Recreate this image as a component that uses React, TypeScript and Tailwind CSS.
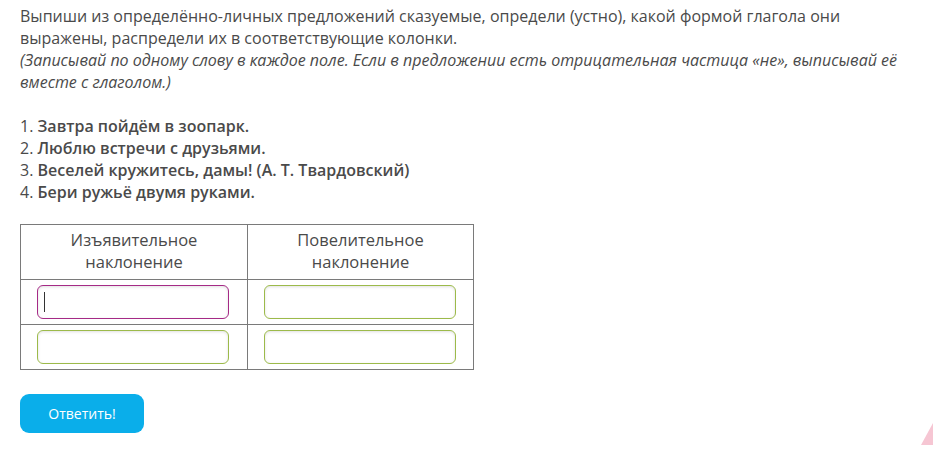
import React from 'react';

const sentences = [
  'Завтра пойдём в зоопарк.',
  'Люблю встречи с друзьями.',
  'Веселей кружитесь, дамы! (А. Т. Твардовский)',
  'Бери ружьё двумя руками.',
];

function Field({ focused = false }: { focused?: boolean }) {
  return (
    <div
      className={`relative h-[34px] w-[192px] rounded-[6px] border bg-white shadow-[inset_0_1px_3px_rgba(0,0,0,0.12)] ${
        focused
          ? 'border-[#a52a86] shadow-[0_0_3px_rgba(200,60,160,0.45),inset_0_1px_3px_rgba(0,0,0,0.12)]'
          : 'border-[#9cba4a]'
      }`}
    >
      {focused && <span className="absolute left-[6px] top-[6px] h-[20px] w-px bg-[#333]" />}
    </div>
  );
}

export default function App() {
  return (
    <div
      className="relative h-[460px] w-[933px] overflow-hidden bg-white px-5 pt-[5px] text-[16px] leading-[22px] text-[#4a4a4a]"
      style={{ fontFamily: '"Open Sans", "Liberation Sans", sans-serif' }}
    >
      <p>
        Выпиши из определённо-личных предложений сказуемые, определи (устно), какой формой глагола они
        выражены, распредели их в соответствующие колонки.
      </p>
      <p className="italic">
        (Записывай по одному слову в каждое поле. Если в предложении есть отрицательная частица «не», выписывай её
        вместе с глаголом.)
      </p>

      <ol className="mt-[22px]">
        {sentences.map((s, i) => (
          <li key={i}>
            {i + 1}. <span className="font-semibold">{s}</span>
          </li>
        ))}
      </ol>

      <table className="mt-[21px] w-[454px] border-collapse border border-[#7a7a7a]">
        <thead>
          <tr className="h-[55px]">
            <th className="w-[227px] border border-[#7a7a7a] pb-[2px] text-center text-[16.5px] font-normal">
              Изъявительное
              <br />
              наклонение
            </th>
            <th className="border border-[#7a7a7a] pb-[2px] text-center text-[16.5px] font-normal">
              Повелительное
              <br />
              наклонение
            </th>
          </tr>
        </thead>
        <tbody>
          {[0, 1].map((r) => (
            <tr key={r} className="h-[45px]">
              <td className="border border-[#7a7a7a]">
                <div className="flex justify-center pr-[2px]">
                  <Field focused={r === 0} />
                </div>
              </td>
              <td className="border border-[#7a7a7a]">
                <div className="flex justify-center pr-[2px]">
                  <Field />
                </div>
              </td>
            </tr>
          ))}
        </tbody>
      </table>

      <button
        type="button"
        className="mt-[24px] flex h-[39px] w-[124px] items-center justify-center rounded-[9px] bg-[#0aaeea] text-[14px] text-white"
      >
        Ответить!
      </button>

      <svg className="absolute right-0 top-[415px]" width="12" height="30" viewBox="0 0 12 30">
        <polygon points="12,8 12,30 0,30" fill="#f6c6d3" />
      </svg>
    </div>
  );
}
